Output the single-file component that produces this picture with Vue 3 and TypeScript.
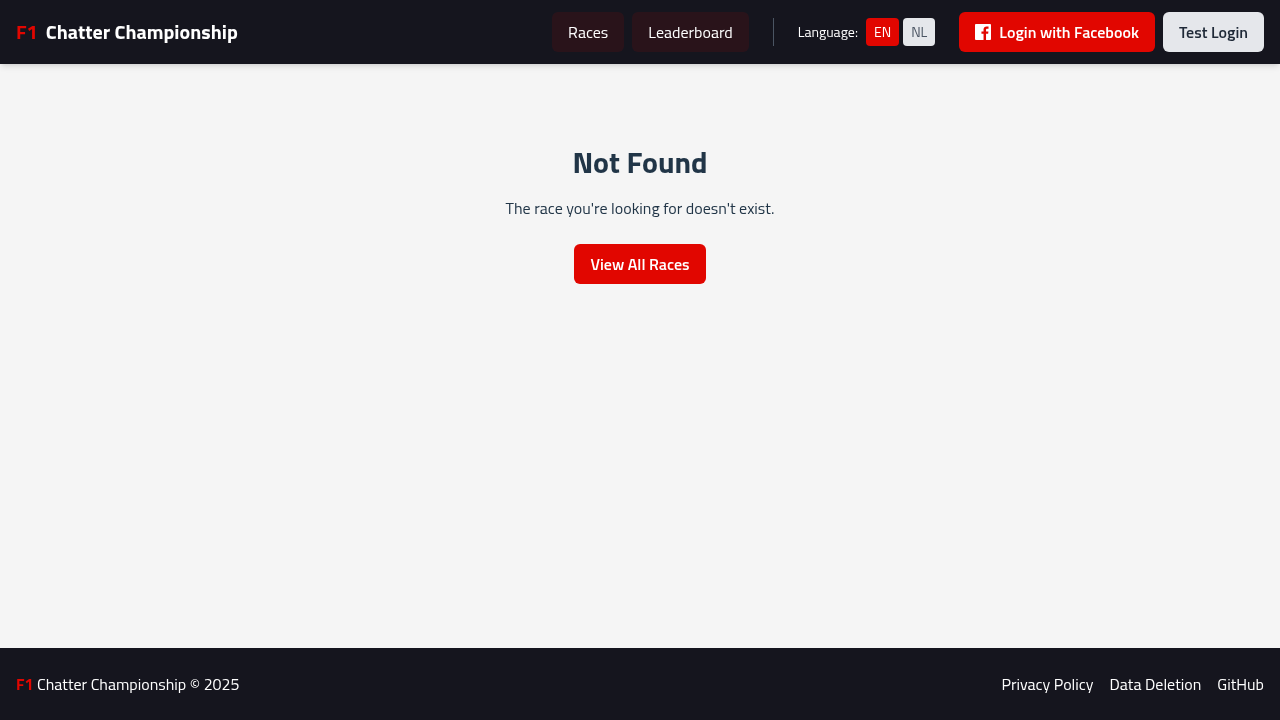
<script setup lang="ts">
interface LinkItem {
  label: string
  name: string
}

const navLinks: LinkItem[] = [
  { label: 'Races', name: 'races' },
  { label: 'Leaderboard', name: 'leaderboard' },
]

const footerLinks: LinkItem[] = [
  { label: 'Privacy Policy', name: 'privacy' },
  { label: 'Data Deletion', name: 'deletion' },
  { label: 'GitHub', name: 'github' },
]
</script>

<template>
  <div class="page">
    <header class="header">
      <a class="brand"><span class="f1">F1</span><span>Chatter Championship</span></a>
      <nav class="nav">
        <a v-for="link in navLinks" :key="link.name" class="nav-link">{{ link.label }}</a>
      </nav>
      <div class="divider"></div>
      <div class="language">
        <span class="language-label">Language:</span>
        <button class="lang en">EN</button>
        <button class="lang nl">NL</button>
      </div>
      <div class="auth">
        <button class="button primary">
          <svg width="16" height="16" viewBox="0 0 16 16" fill="currentColor" aria-hidden="true">
            <path d="M15.117 0H.883A.883.883 0 0 0 0 .883v14.234c0 .488.395.883.883.883h7.663V9.804H6.46V7.39h2.086V5.607c0-2.066 1.262-3.19 3.106-3.19.883 0 1.642.064 1.863.094v2.16h-1.28c-1 0-1.195.476-1.195 1.176v1.54h2.39l-.31 2.416h-2.08V16h4.077a.883.883 0 0 0 .883-.883V.883A.883.883 0 0 0 15.117 0z" />
          </svg>
          <span>Login with Facebook</span>
        </button>
        <button class="button secondary">Test Login</button>
      </div>
    </header>

    <main class="main">
      <h1>Not Found</h1>
      <p>The race you're looking for doesn't exist.</p>
      <button class="button primary">View All Races</button>
    </main>

    <footer class="footer">
      <div><span class="f1 footer-f1">F1</span> Chatter Championship © 2025</div>
      <nav class="footer-nav">
        <a v-for="link in footerLinks" :key="link.name">{{ link.label }}</a>
      </nav>
    </footer>
  </div>
</template>

<style>
body {
  margin: 0;
  background: #f5f5f5;
}
</style>

<style scoped>
.page {
  display: flex;
  flex-direction: column;
  height: 100vh;
  overflow: hidden;
  color: #213547;
  font-family: "Titillium Web", Roboto, "Liberation Sans", sans-serif;
  font-size: 16px;
  line-height: 24px;
  white-space: nowrap;
  will-change: transform;
  -webkit-font-smoothing: antialiased;
}
.header {
  display: flex;
  align-items: center;
  flex: none;
  box-sizing: border-box;
  height: 64px;
  padding: 0 16px;
  background: #15151e;
  color: #fff;
  box-shadow: 0 4px 6px -1px rgba(0, 0, 0, 0.1), 0 2px 4px -2px rgba(0, 0, 0, 0.1);
}
.brand {
  display: flex;
  gap: 8px;
  margin-right: auto;
  font-size: 20px;
  line-height: 28px;
  font-weight: 700;
}
.f1 {
  color: #e10600;
}
.footer-f1 {
  font-weight: 700;
}
.nav {
  display: flex;
  gap: 8px;
}
.nav-link {
  padding: 8px 16px;
  border-radius: 6px;
  background: rgba(225, 6, 0, 0.1);
}
.divider {
  width: 1px;
  height: 28px;
  margin: 0 24px;
  background: #4b5563;
}
.language {
  display: flex;
  align-items: center;
  font-size: 14px;
  line-height: 20px;
}
.language-label {
  margin-right: 8px;
}
button {
  display: flex;
  align-items: center;
  margin: 0;
  border: 0;
  font: inherit;
}
.lang {
  padding: 4px 8px;
  border-radius: 4px;
}
.en {
  margin-right: 4px;
  background: #e10600;
  color: #fff;
}
.nl {
  background: #e5e7eb;
  color: #4b5563;
}
.auth {
  display: flex;
  gap: 8px;
  margin-left: 24px;
}
.button {
  gap: 8px;
  padding: 8px 16px;
  border-radius: 6px;
  font-weight: 600;
}
.primary {
  background: #e10600;
  color: #fff;
}
.secondary {
  background: #e5e7eb;
  color: #1f2937;
}
.main {
  display: flex;
  flex: 1;
  flex-direction: column;
  align-items: center;
  padding-top: 80px;
}
h1 {
  margin: 0 0 16px;
  font-size: 30px;
  line-height: 36px;
  font-weight: 700;
}
p {
  margin: 0 0 24px;
}
.footer {
  display: flex;
  align-items: center;
  justify-content: space-between;
  flex: none;
  box-sizing: border-box;
  height: 72px;
  padding: 0 16px;
  background: #15151e;
  color: #fff;
}
.footer-nav {
  display: flex;
  gap: 16px;
}
</style>
